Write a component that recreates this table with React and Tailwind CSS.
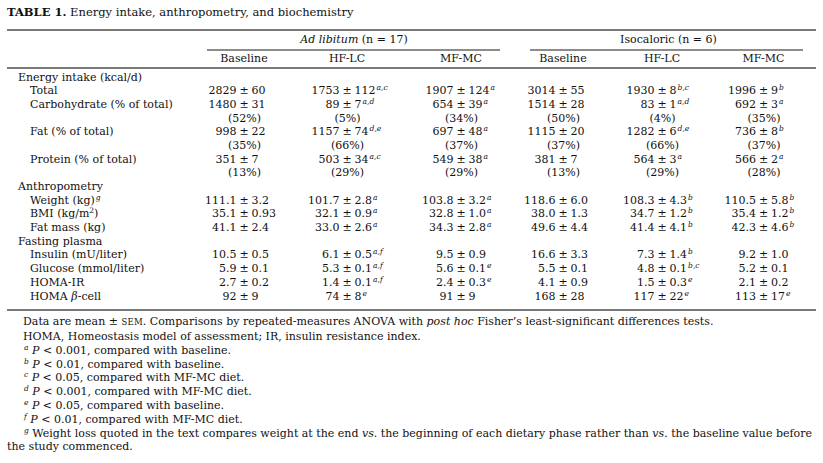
import React from "react";

const FONT = { fontFamily: '"DejaVu Serif", "Liberation Serif", serif' };

// [label, indent, cells] ; cell = [left, right, sup] or "(52%)" or null
const ROWS = [
  ["Energy intake (kcal/d)", 0, null],
  ["Total", 1, [["2829", "60"], ["1753", "112", "a,c"], ["1907", "124", "a"], ["3014", "55"], ["1930", "8", "b,c"], ["1996", "9", "b"]]],
  ["Carbohydrate (% of total)", 1, [["1480", "31"], ["89", "7", "a,d"], ["654", "39", "a"], ["1514", "28"], ["83", "1", "a,d"], ["692", "3", "a"]]],
  ["", 1, ["(52%)", "(5%)", "(34%)", "(50%)", "(4%)", "(35%)"]],
  ["Fat (% of total)", 1, [["998", "22"], ["1157", "74", "d,e"], ["697", "48", "a"], ["1115", "20"], ["1282", "6", "d,e"], ["736", "8", "b"]]],
  ["", 1, ["(35%)", "(66%)", "(37%)", "(37%)", "(66%)", "(37%)"]],
  ["Protein (% of total)", 1, [["351", "7"], ["503", "34", "a,c"], ["549", "38", "a"], ["381", "7"], ["564", "3", "a"], ["566", "2", "a"]]],
  ["", 1, ["(13%)", "(29%)", "(29%)", "(13%)", "(29%)", "(28%)"]],
  ["Anthropometry", 0, null],
  ["weight", 1, [["111.1", "3.2"], ["101.7", "2.8", "a"], ["103.8", "3.2", "a"], ["118.6", "6.0"], ["108.3", "4.3", "b"], ["110.5", "5.8", "b"]]],
  ["bmi", 1, [["35.1", "0.93"], ["32.1", "0.9", "a"], ["32.8", "1.0", "a"], ["38.0", "1.3"], ["34.7", "1.2", "b"], ["35.4", "1.2", "b"]]],
  ["Fat mass (kg)", 1, [["41.1", "2.4"], ["33.0", "2.6", "a"], ["34.3", "2.8", "a"], ["49.6", "4.4"], ["41.4", "4.1", "b"], ["42.3", "4.6", "b"]]],
  ["Fasting plasma", 0, null],
  ["Insulin (mU/liter)", 1, [["10.5", "0.5"], ["6.1", "0.5", "a,f"], ["9.5", "0.9"], ["16.6", "3.3"], ["7.3", "1.4", "b"], ["9.2", "1.0"]]],
  ["Glucose (mmol/liter)", 1, [["5.9", "0.1"], ["5.3", "0.1", "a,f"], ["5.6", "0.1", "e"], ["5.5", "0.1"], ["4.8", "0.1", "b,c"], ["5.2", "0.1"]]],
  ["HOMA-IR", 1, [["2.7", "0.2"], ["1.4", "0.1", "a,f"], ["2.4", "0.3", "e"], ["4.1", "0.9"], ["1.5", "0.3", "e"], ["2.1", "0.2"]]],
  ["beta", 1, [["92", "9"], ["74", "8", "e"], ["91", "9"], ["168", "28"], ["117", "22", "e"], ["113", "17", "e"]]],
];

const NOTES = [
  ["a", "P < 0.001, compared with baseline."],
  ["b", "P < 0.01, compared with baseline."],
  ["c", "P < 0.05, compared with MF-MC diet."],
  ["d", "P < 0.001, compared with MF-MC diet."],
  ["e", "P < 0.05, compared with baseline."],
  ["f", "P < 0.01, compared with MF-MC diet."],
];

const COLS = "grid-cols-[193px_88px_118px_110px_94px_104px_99px]";

function Sup({ children }) {
  return <sup className="italic text-[7.5px] relative -top-[4px] ml-[1px]">{children}</sup>;
}

function Label({ text }) {
  if (text === "weight") return <>Weight (kg)<Sup>g</Sup></>;
  if (text === "bmi") return <>BMI (kg/m<sup className="text-[7.5px] relative -top-[4px]">2</sup>)</>;
  if (text === "beta") return <>HOMA <i>β</i>-cell</>;
  return text;
}

function Cell({ c }) {
  if (typeof c === "string") return <div className="text-center pl-[1px]">{c}</div>;
  return (
    <div className="flex">
      <span className="flex-1 text-right">{c[0]}</span>
      <span className="px-[3px]">±</span>
      <span className="flex-1 text-left whitespace-nowrap">
        {c[1]}
        {c[2] && <Sup>{c[2]}</Sup>}
      </span>
    </div>
  );
}

export default function App() {
  return (
    <div className="w-[823px] h-[463px] bg-white text-[#111] text-[11px] px-[7px] pt-[5px]" style={FONT}>
      <div className="h-[14px] leading-[14px] text-[11.5px]">
        <b>TABLE 1.</b> Energy intake, anthropometry, and biochemistry
      </div>
      <div className="mt-[10px] h-[2px] bg-[#7a7a7a]" />

      <div className={`grid ${COLS}`}>
        <div />
        <div className="col-span-3">
          <div className="h-[18px] leading-[18px] text-center">
            <span className="pr-[8px]"><i>Ad libitum</i> (n = 17)</span>
          </div>
          <div className="h-[2px] bg-[#8c8c8c] ml-[7px] mr-[16px]" />
        </div>
        <div className="col-span-3">
          <div className="h-[18px] leading-[18px] text-center">
            <span className="pl-[8px]">Isocaloric (n = 6)</span>
          </div>
          <div className="h-[2px] bg-[#8c8c8c] ml-[14px] mr-[10px]" />
        </div>
      </div>
      <div className={`grid ${COLS} h-[16px] leading-[16px] text-center`}>
        <div />
        <div>Baseline</div>
        <div>HF-LC</div>
        <div>MF-MC</div>
        <div>Baseline</div>
        <div>HF-LC</div>
        <div>MF-MC</div>
      </div>
      <div className="h-[2px] bg-[#7a7a7a]" />

      <div className="pt-[1.5px] pb-[6px] leading-[13.7px]">
        {ROWS.map(([label, ind, cells], i) => (
          <div key={i} className={`grid ${COLS} h-[13.7px]`}>
            <div className={ind ? "pl-[23px]" : "pl-[11px]"}>
              <Label text={label} />
            </div>
            {cells && cells.map((c, j) => <Cell key={j} c={c} />)}
          </div>
        ))}
      </div>
      <div className="h-[2px] bg-[#7a7a7a]" />

      <div className="mt-[4px] leading-[13.8px]">
        <p className="indent-[16px]">
          Data are mean ± <span className="text-[8.5px] tracking-[0.2px]">SEM</span>. Comparisons by repeated-measures ANOVA with{" "}
          <i>post hoc</i> Fisher’s least-significant differences tests.
        </p>
        <p className="indent-[16px]">HOMA, Homeostasis model of assessment; IR, insulin resistance index.</p>
        {NOTES.map(([k, t]) => (
          <p key={k} className="indent-[16px]">
            <Sup>{k}</Sup> <i>P</i>
            {t.slice(1)}
          </p>
        ))}
        <p className="indent-[16px]">
          <Sup>g</Sup> Weight loss quoted in the text compares weight at the end <i>vs.</i> the beginning of each dietary
          phase rather than <i>vs.</i> the baseline value before the study commenced.
        </p>
      </div>
    </div>
  );
}
